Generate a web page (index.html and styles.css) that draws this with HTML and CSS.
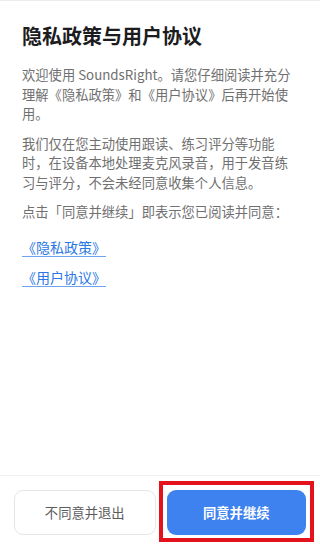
FILE: index.html
```html
<!DOCTYPE html>
<html lang="zh-CN">
<head>
    <meta charset="UTF-8">
    <title>隐私政策与用户协议</title>
    <link rel="stylesheet" href="styles.css">
</head>
<body>
    <div class="page">
        <div class="content">
            <h1 class="title">隐私政策与用户协议</h1>
            <p class="text">欢迎使用 SoundsRight。请您仔细阅读并充分理解《隐私政策》和《用户协议》后再开始使<br>用。</p>
            <p class="text">我们仅在您主动使用跟读、练习评分等功能时，在设备本地处理麦克风录音，用于发音练习与评分，不会未经同意收集个人信息。</p>
            <p class="text">点击「同意并继续」即表示您已阅读并同意：</p>
            <div class="links">
                <a href="#" class="link">《隐私政策》</a>
                <a href="#" class="link">《用户协议》</a>
            </div>
        </div>

        <!-- Bottom actions -->
        <div class="footer">
            <button class="btn btn-decline">不同意并退出</button>
            <button class="btn btn-accept">同意并继续</button>
        </div>
    </div>

    <!-- Highlight box -->
    <div class="highlight"></div>
</body>
</html>
```

FILE: styles.css
```css
/* General Styles */
body {
    margin: 0;
    background: #ffffff;
    font-family: "Noto Sans CJK SC", sans-serif;
    overflow: hidden;
}

.page {
    height: 549px;
    display: grid;
    grid-template-rows: 1fr auto;
    border-top: 1px solid #ececec;
    box-sizing: border-box;
}

/* Content */
.content {
    padding: 22px 22px 0;
}

.title {
    margin: 0 0 16px;
    font-size: 20px;
    line-height: 26px;
    font-weight: 700;
    color: #1c1c1e;
}

.text {
    margin: 0 0 10px;
    font-size: 13.3px;
    line-height: 19.5px;
    color: #707070;
}

.links {
    display: flex;
    flex-direction: column;
    align-items: flex-start;
    gap: 10px;
    margin-top: 15px;
}

.link {
    font-size: 14px;
    line-height: 20px;
    color: #2b78e4;
    text-decoration: underline;
    text-decoration-color: #6ea3ee;
    text-underline-offset: 3px;
}

/* Footer Buttons */
.footer {
    display: flex;
    gap: 11px;
    padding: 14px 14px 14px;
    border-top: 1px solid #efefef;
}

.btn {
    flex: 1;
    height: 45px;
    border-radius: 9px;
    font-family: inherit;
    font-size: 13.3px;
    cursor: pointer;
}

.btn-decline {
    background: #ffffff;
    border: 1px solid #e6e6e6;
    color: #5c5c5c;
}

.btn-accept {
    background: #3e82f0;
    border: none;
    color: #ffffff;
    font-weight: 700;
}

/* Annotation box over the accept button */
.highlight {
    position: absolute;
    left: 159px;
    top: 481px;
    width: 155px;
    height: 61px;
    border: 4px solid #e3121b;
    box-sizing: border-box;
}
```
